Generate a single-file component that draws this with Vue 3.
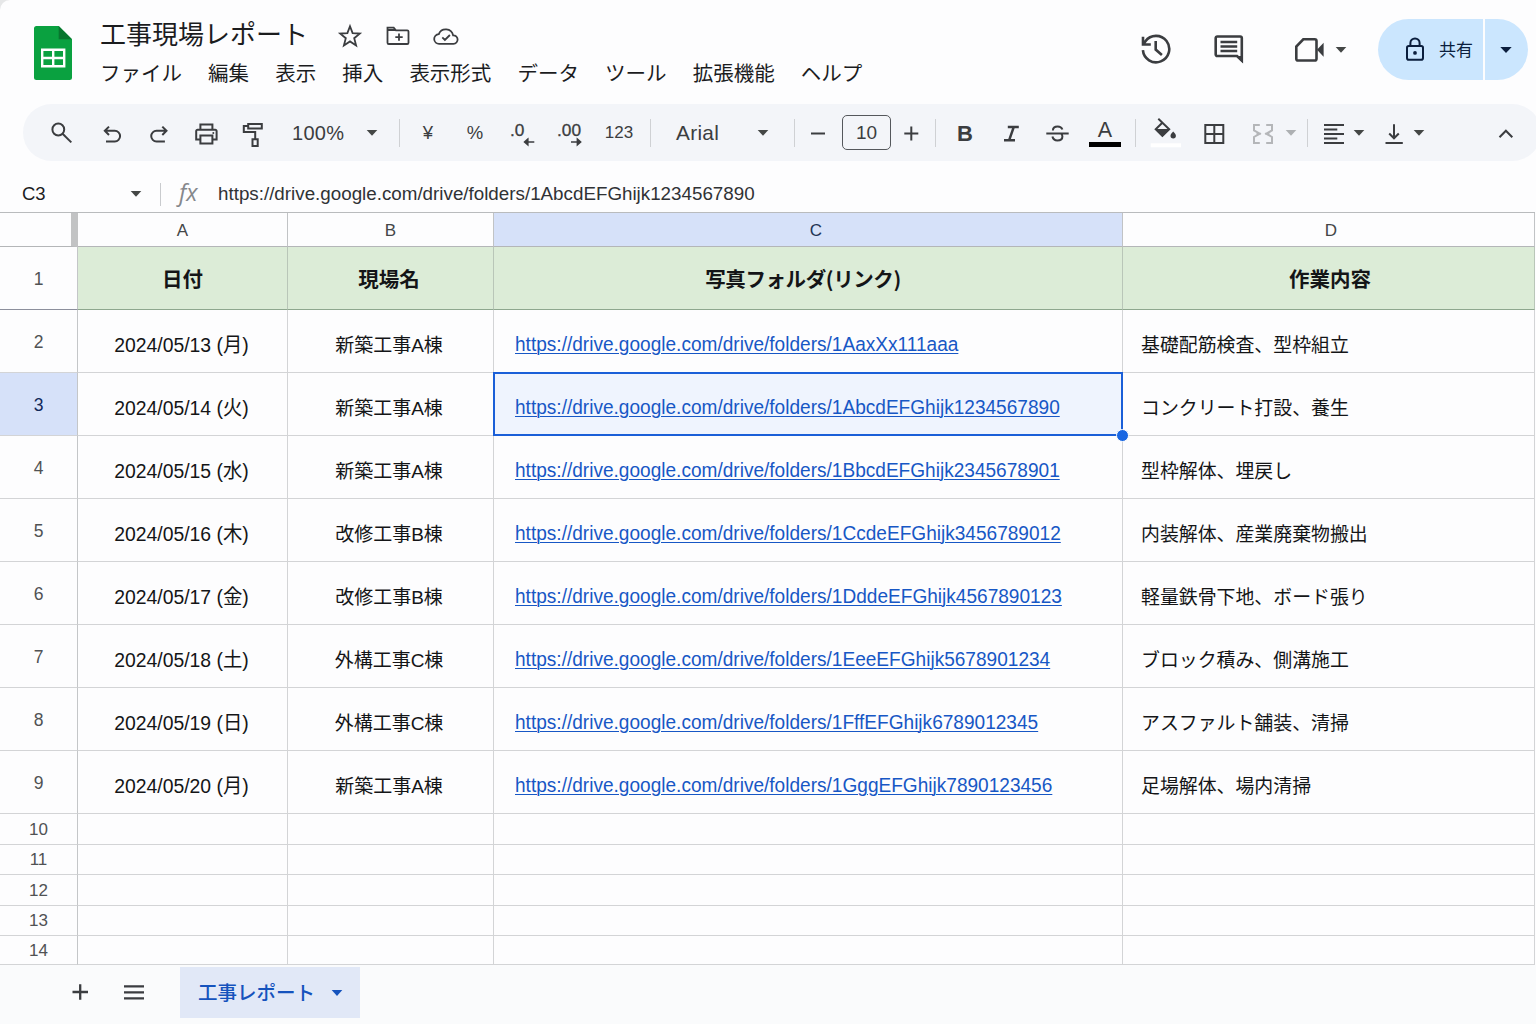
<template>
  <div class="app">
    <header class="header">
      <svg class="logo" viewBox="0 0 38 54">
        <path d="M2.5 0H24.7L38 13.3V51.5A2.5 2.5 0 0 1 35.5 54H2.5A2.5 2.5 0 0 1 0 51.5V2.5A2.5 2.5 0 0 1 2.5 0Z" fill="#0aa140" />
        <path d="M24.7 0 38 13.3H24.7Z" fill="#08762e" />
        <path d="M8.2 23.8h22v16.5h-22zM8.2 32h22M19.2 23.8v16.5" fill="none" stroke="#fff" stroke-width="2.4" />
      </svg>

      <div class="heading">
        <div class="title-row">
          <h1 class="title">工事現場レポート</h1>
          <svg class="icon title-icon" viewBox="0 0 28 28">
            <path d="m14 4.2 2.6 6.9 7.2.5-5.6 4.6 1.9 7.2-6.1-4-6.1 4 1.900-7.200-5.600-4.600 7.200-.5z" />
          </svg>
          <svg class="icon title-icon" viewBox="0 0 28 28">
            <path d="M3.500 5.700h6.200l2.200 2.600h11.300a1.300 1.300 0 0 1 1.300 1.300v11.100a1.300 1.300 0 0 1-1.300 1.300H4.800a1.300 1.300 0 0 1-1.300-1.300zM3.500 8h8M15 11.400v7.400M11.300 15.100h7.400" />
          </svg>
          <svg class="icon title-icon" viewBox="0 0 28 28">
            <path d="M7.400 21.900a4.900 4.900 0 0 1-.6-9.800 7.500 7.500 0 0 1 14.300 1.200 4.300 4.300 0 0 1 .4 8.600zM10.300 15.400l2.600 2.600 5-5" />
          </svg>
        </div>
        <nav class="menu">
          <span v-for="item in menus" :key="item">{{ item }}</span>
        </nav>
      </div>

      <div class="actions">
        <svg class="icon action action--history" viewBox="0 0 32 32">
          <path d="M2.900 17.200A13.200 13.200 0 1 0 5.400 8.300M3 3.800v7.700h7.800M3.300 11.200l3.400-4.400M15.700 8v8.600l6.200 5.400" />
        </svg>
        <svg class="icon action action--comment" viewBox="0 0 32 32">
          <path d="M28.800 27.500 24 23H4.300a1.600 1.600 0 0 1-1.600-1.600V5.100a1.600 1.600 0 0 1 1.600-1.600h22.900a1.600 1.600 0 0 1 1.600 1.600zM7.500 9h16.700M7.500 13.500h16.700M7.500 18h16.700" />
          <path d="m29.800 30-6.800-7h6.800z" class="solid" />
        </svg>
        <svg class="icon action action--meet" viewBox="0 0 32 32">
          <path d="M10.300 6.300h11.400a1.800 1.800 0 0 1 1.800 1.800v17.600a1.800 1.800 0 0 1-1.800 1.800H5.100a1.800 1.800 0 0 1-1.800-1.800V13.600z" />
          <path d="m24 16.800 6.600-7v14z" class="solid" />
        </svg>
        <svg class="caret" viewBox="0 0 12 6"><path d="M.7 0h10.6L6 5.7z" /></svg>
        <div class="share">
          <div class="share-main">
            <svg class="icon lock" viewBox="0 0 18 24">
              <rect x="1" y="9" width="16" height="13.7" rx="1.8" />
              <path d="M4.400 9V6a4.600 4.600 0 0 1 9.200 0v3" />
              <circle cx="9" cy="15.900" r="1.900" class="solid" />
            </svg>
            <span>共有</span>
          </div>
          <div class="share-more">
            <svg class="caret" viewBox="0 0 12 6"><path d="M.3 0h11.400L6 6z" /></svg>
          </div>
        </div>
      </div>
    </header>

    <div class="toolbar">
      <div class="group group--history">
        <svg class="icon tool" viewBox="0 0 28 29"><circle cx="10.3" cy="11.500" r="5.900" /><path d="m14.600 15.800 8.700 8.600" /></svg>
        <svg class="icon tool" viewBox="0 0 28 29"><path d="M11 8.600 6.800 12.800l4.200 4.200M6.800 12.800h10a5.200 5.200 0 0 1 0 10.600H8" /></svg>
        <svg class="icon tool" viewBox="0 0 28 29"><path d="m17.300 8.600 4.200 4.200-4.200 4.200M21.500 12.800h-10a5.200 5.200 0 0 0 0 10.600h8.400" /></svg>
        <svg class="icon tool" viewBox="0 0 28 29">
          <path d="M8.400 21.400H4.200v-8.300a1.300 1.300 0 0 1 1.300-1.300h17.800a1.300 1.300 0 0 1 1.300 1.300v8.300h-4.200M8.400 11.800V6.600h12v5.200M8.400 17.600h12v8h-12z" />
          <circle cx="21.300" cy="15" r="1" class="dot" />
        </svg>
        <svg class="icon tool" viewBox="0 0 28 29">
          <path d="M9.200 5.900h13.600v4.600H9.200zM9.200 8H4.800v5.900h11.400v7.400M13.500 21.300h5.200V28h-5.200z" />
        </svg>
      </div>

      <div class="select select--zoom">
        <span>100%</span>
        <svg class="caret" viewBox="0 0 12 6"><path d="M.7 0h10.600L6 5.700z" /></svg>
      </div>
      <i class="rule rule--zoom"></i>

      <div class="group group--format">
        <span class="tool glyph">¥</span>
        <span class="tool glyph">%</span>
        <svg class="tool decimal" viewBox="0 0 28 29">
          <text x="2" y="17.500">.0</text>
          <path d="M26.300 24H17M19.800 21.200 16.600 24l3.200 2.800z" />
        </svg>
        <svg class="tool decimal" viewBox="0 0 28 29">
          <text x="2" y="17.500">.00</text>
          <path d="M16 24h9M22.400 21.200l3.200 2.800-3.200 2.800z" />
        </svg>
        <span class="tool glyph glyph--number">123</span>
      </div>
      <i class="rule rule--format"></i>

      <div class="select select--font">
        <span>Arial</span>
        <svg class="caret" viewBox="0 0 12 6"><path d="M.7 0h10.600L6 5.700z" /></svg>
      </div>
      <i class="rule rule--font"></i>

      <div class="group group--size">
        <svg class="icon tool" viewBox="0 0 28 29"><path d="M7 15.500h14" /></svg>
        <span class="size">10</span>
        <svg class="icon tool" viewBox="0 0 28 29"><path d="M7.300 15.500h14M14.300 8.500v14" /></svg>
      </div>
      <i class="rule rule--size"></i>

      <div class="group group--style">
        <span class="tool bold">B</span>
        <svg class="icon tool italic" viewBox="0 0 28 29"><path d="M10.800 8.900h11M7 22.300h11M16.800 8.900l-4.700 13.400" /></svg>
        <svg class="icon tool" viewBox="0 0 28 29">
          <path d="M3.300 15.500h22.400M9.900 12.500c0-2.400 2-4 4.800-4 2.300 0 3.900 1 4.700 3M9.400 18.500c.6 2.500 2.500 3.900 5 3.900 2.900 0 5-1.600 5-4 0-1.200-.4-2.200-1.300-3" />
        </svg>
        <span class="color">A</span>
      </div>
      <i class="rule rule--style"></i>

      <div class="group group--cell">
        <svg class="icon tool fill" viewBox="0 0 32 30">
          <path d="m8.300.8 10.900 10.400-6.800 6.600-6.700-6.600 6.600-6.500" />
          <path d="M5 11h15l-7.600 7.800z" class="solid" />
          <path d="M23.200 13.600c1.700 1.900 2.700 3 2.700 4.100a2.700 2.700 0 0 1-5.400 0c0-1.100 1-2.200 2.700-4.100z" class="solid" />
          <path d="M.7 25.300h30.300v4H.7z" class="swatch" />
        </svg>
        <svg class="icon tool borders" viewBox="0 0 28 29"><path d="M5.300 7h18v18h-18zM14.300 7v18M5.300 16h18" /></svg>
        <svg class="icon tool merge" viewBox="0 0 28 29">
          <path d="M10.800 7H5v5.500l5.800 3.200L5 19v6h5.800M7.500 15.700H12M17.200 7H23v5.500l-5.800 3.200L23 19v6h-5.800M20.500 15.700H16" />
        </svg>
        <svg class="caret caret--muted" viewBox="0 0 12 6"><path d="M.7 0h10.600L6 5.700z" /></svg>
      </div>
      <i class="rule rule--cell"></i>

      <div class="group group--align">
        <svg class="icon tool" viewBox="0 0 28 29"><path d="M4 7h20M4 11.500h13.300M4 16h20M4 20.500h13.300M4 25h20" /></svg>
        <svg class="caret" viewBox="0 0 12 6"><path d="M.7 0h10.600L6 5.700z" /></svg>
        <svg class="icon tool valign" viewBox="0 0 28 29"><path d="M14 6.300v14M9.200 15.500 14 20.300l4.800-4.800M5.500 25h17.300" /></svg>
        <svg class="caret" viewBox="0 0 12 6"><path d="M.7 0h10.600L6 5.700z" /></svg>
      </div>

      <svg class="icon tool collapse" viewBox="0 0 28 29"><path d="m7.500 19.300 6.400-6.600 6.400 6.600" /></svg>
    </div>

    <div class="formula">
      <span class="cell-name">C3</span>
      <svg class="caret" viewBox="0 0 12 6"><path d="M.7 0h10.600L6 5.700z" /></svg>
      <i class="formula-rule"></i>
      <span class="fx">fx</span>
      <span class="formula-text">https://drive.google.com/drive/folders/1AbcdEFGhijk1234567890</span>
    </div>

    <main class="sheet">
      <div class="corner"></div>
      <div
        v-for="col in columns"
        :key="col"
        class="col-head"
        :class="[`col-head--${col.toLowerCase()}`, { 'col-head--active': col === 'C' }]"
      >
        {{ col }}
      </div>

      <div class="row-head row-head--frozen">1</div>
      <div
        v-for="(label, index) in labels"
        :key="label"
        class="cell cell--label"
        :class="`cell--label-${columns[index].toLowerCase()}`"
      >
        {{ label }}
      </div>

      <template v-for="(row, index) in rows" :key="row.date">
        <div class="row-head" :class="{ 'row-head--active': index === 1 }">{{ index + 2 }}</div>
        <div class="cell cell--center"><span class="date">{{ row.date }}</span></div>
        <div class="cell cell--center">{{ row.site }}</div>
        <div class="cell cell--link" :class="{ 'cell--selected': index === 1 }">
          <a>https://drive.google.com/drive/folders/{{ row.folder }}</a>
        </div>
        <div class="cell cell--work">{{ row.work }}</div>
      </template>

      <template v-for="n in 5" :key="n">
        <div class="row-head row-head--empty">{{ n + 9 }}</div>
        <div v-for="col in columns" :key="col" class="cell"></div>
      </template>
    </main>

    <footer class="tabs">
      <svg class="icon tabs-add" viewBox="0 0 28 28"><path d="M6.500 14h15.500M14.200 6.300v15.500" /></svg>
      <svg class="icon tabs-list" viewBox="0 0 28 28"><path d="M4 8.300h20M4 14.300h20M4 20.300h20" /></svg>
      <div class="tab">
        <span>工事レポート</span>
        <svg class="caret" viewBox="0 0 12 6"><path d="M.7 0h10.600L6 6z" /></svg>
      </div>
    </footer>
  </div>
</template>

<script setup>
const menus = ['ファイル', '編集', '表示', '挿入', '表示形式', 'データ', 'ツール', '拡張機能', 'ヘルプ']

const columns = ['A', 'B', 'C', 'D']

const labels = ['日付', '現場名', '写真フォルダ(リンク)', '作業内容']

const rows = [
  { date: '2024/05/13 (月)', site: '新築工事A棟', folder: '1AaxXx111aaa', work: '基礎配筋検査、型枠組立' },
  { date: '2024/05/14 (火)', site: '新築工事A棟', folder: '1AbcdEFGhijk1234567890', work: 'コンクリート打設、養生' },
  { date: '2024/05/15 (水)', site: '新築工事A棟', folder: '1BbcdEFGhijk2345678901', work: '型枠解体、埋戻し' },
  { date: '2024/05/16 (木)', site: '改修工事B棟', folder: '1CcdeEFGhijk3456789012', work: '内装解体、産業廃棄物搬出' },
  { date: '2024/05/17 (金)', site: '改修工事B棟', folder: '1DddeEFGhijk4567890123', work: '軽量鉄骨下地、ボード張り' },
  { date: '2024/05/18 (土)', site: '外構工事C棟', folder: '1EeeEFGhijk5678901234', work: 'ブロック積み、側溝施工' },
  { date: '2024/05/19 (日)', site: '外構工事C棟', folder: '1FffEFGhijk6789012345', work: 'アスファルト舗装、清掃' },
  { date: '2024/05/20 (月)', site: '新築工事A棟', folder: '1GggEFGhijk7890123456', work: '足場解体、場内清掃' },
]
</script>

<style>
body {
  background: #e6e7e8;
}
</style>

<style scoped>
.app {
  display: flex;
  flex-direction: column;
  width: 1536px;
  height: 1024px;
  overflow: hidden;
  border-top-left-radius: 10px;
  background: #fdfdfe;
  color: #1b1c1e;
  font-family: 'Liberation Sans', 'Noto Sans CJK JP', sans-serif;
}

.icon {
  flex: none;
  fill: none;
  stroke: #3b3d40;
  stroke-width: 2;
}

.icon .solid {
  fill: #3b3d40;
  stroke: none;
}

.caret {
  flex: none;
  width: 12px;
  height: 6px;
  fill: #444746;
}

/* header */
.header {
  display: flex;
  flex: none;
  height: 104px;
  box-sizing: border-box;
  padding-left: 34px;
}

.logo {
  width: 38px;
  height: 54px;
  margin-top: 26px;
}

.heading {
  margin: 14px 0 0 28px;
  font-family: 'Noto Sans CJK JP', sans-serif;
}

.title-row {
  display: flex;
  align-items: center;
  height: 38px;
}

.title {
  width: 236px;
  margin: 0;
  font-size: 26px;
  font-weight: 400;
  line-height: 38px;
  white-space: nowrap;
}

.title-icon {
  width: 28px;
  height: 28px;
  margin: 5px 20px 0 0;
  stroke-width: 1.8;
}

.menu {
  display: flex;
  gap: 26.1px;
  margin-top: 4px;
  font-size: 20.5px;
  line-height: 32px;
  white-space: nowrap;
}

.actions {
  display: flex;
  align-items: center;
  height: 61px;
  margin: 19px 8px 0 auto;
}

.action {
  width: 32px;
  height: 32px;
  margin-top: -1px;
  stroke-width: 2.6;
}

.action--history {
  margin-right: 41px;
}

.action--comment {
  margin-right: 48px;
}

.action--meet {
  margin-right: 10px;
}

.share {
  display: flex;
  height: 61px;
  margin-left: 31px;
  color: #0b1e3d;
}

.share-main,
.share-more {
  display: flex;
  align-items: center;
  background: #cbe6fe;
}

.share-main {
  width: 105px;
  box-sizing: border-box;
  padding-left: 28px;
  border-radius: 31px 0 0 31px;
  font-family: 'Noto Sans CJK JP', sans-serif;
  font-size: 17px;
}

.share-main span {
  padding-bottom: 3px;
}

.share-more {
  justify-content: center;
  width: 43px;
  margin-left: 2px;
  box-sizing: border-box;
  padding-right: 2px;
  border-radius: 0 31px 31px 0;
}

.share .caret {
  fill: #0b1e3d;
}

.lock {
  width: 18px;
  height: 24px;
  margin: 0 15px 2px 0;
  stroke: #0b1e3d;
}

.lock .solid {
  fill: #0b1e3d;
}

/* toolbar */
.toolbar {
  display: flex;
  flex: none;
  align-items: center;
  width: 1518px;
  height: 57px;
  box-sizing: border-box;
  margin-left: 23px;
  padding-left: 25px;
  border-radius: 29px;
  background: #f3f5f9;
  color: #3b3d40;
}

.group {
  display: flex;
  align-items: center;
}

.tool {
  flex: none;
  width: 28px;
  height: 29px;
}

.group--history {
  gap: 19px;
}

.group--history .tool:first-child {
  margin-right: 3px;
}

.select {
  display: flex;
  align-items: center;
  justify-content: space-between;
  padding-top: 1px;
  font-size: 20px;
  line-height: 24px;
}

.select--zoom {
  width: 86px;
  margin-left: 25px;
  letter-spacing: 0.3px;
}

.select--font {
  width: 93px;
  margin-left: 25px;
  font-size: 20.8px;
  letter-spacing: 0.3px;
}

.rule {
  flex: none;
  width: 1px;
  height: 28px;
  background: #cfd1d4;
}

.rule--zoom {
  margin: 0 14px 0 21px;
}

.rule--format {
  margin-left: 17px;
}

.rule--font {
  margin: 0 9px 0 25px;
}

.rule--size {
  margin: 0 15px 0 10px;
}

.rule--style {
  margin: 0 14px;
}

.rule--cell {
  margin: 0 12px 0 10px;
}

.group--format {
  gap: 19px;
}

.glyph {
  font-size: 18.5px;
  line-height: 30px;
  text-align: center;
}

.glyph--number {
  display: flex;
  justify-content: center;
  margin-left: 3px;
  font-size: 17px;
}

.decimal {
  fill: #3b3d40;
  stroke: #3b3d40;
  stroke-width: 1.6;
}

.decimal text {
  font-size: 17.3px;
  stroke-width: 0.3;
}

.size {
  width: 49px;
  height: 35px;
  box-sizing: border-box;
  margin: 0 6px 0 10px;
  border: 1.5px solid #55585c;
  border-radius: 5px;
  font-size: 19px;
  line-height: 34px;
  text-align: center;
}

.group--style {
  gap: 18px;
}

.bold {
  font-size: 22px;
  font-weight: 700;
  line-height: 31px;
  text-align: center;
}

.italic {
  stroke-width: 2.5;
}

.color {
  width: 32px;
  height: 24px;
  border-bottom: 5px solid #000;
  font-size: 21.5px;
  line-height: 25px;
  text-align: center;
}

.fill {
  width: 32px;
  height: 30px;
  margin: 1px 18px 0 0;
}

.fill .swatch {
  fill: #fff;
  stroke: none;
}

.borders {
  margin-right: 21px;
}

.merge {
  margin-right: 8px;
  stroke: #b4b6b9;
}

.dot {
  fill: #3b3d40;
  stroke: none;
}

.caret--muted {
  fill: #adb0b3;
}

.group--align .tool {
  margin-right: 5px;
}

.group--align .valign {
  margin-left: 15px;
}

.collapse {
  margin-left: 67px;
}

/* formula bar */
.formula {
  display: flex;
  flex: none;
  align-items: center;
  height: 51px;
  box-sizing: border-box;
  padding: 15px 0 0 22px;
  font-size: 18.8px;
}

.cell-name {
  width: 108px;
  font-size: 18.5px;
}

.formula-rule {
  width: 1px;
  height: 23px;
  margin: 0 18px;
  background: #c9cbce;
}

.fx {
  width: 39px;
  padding-bottom: 4px;
  color: #85888c;
  font-family: 'Open Sans', sans-serif;
  font-size: 23.5px;
  font-style: italic;
  line-height: 24px;
}

.formula-text {
  color: #303235;
}

/* grid */
.sheet {
  display: grid;
  flex: none;
  grid-template-columns: 78px 210px 206px 629px 412px;
  grid-template-rows: 34px repeat(9, 63px) 31px 30px 31px 30px 29px;
  width: 1535px;
  border-top: 1px solid #b9bbbd;
}

.corner,
.col-head,
.row-head,
.cell {
  box-sizing: border-box;
  border-right: 1px solid #d3d4d6;
  border-bottom: 1px solid #d3d4d6;
}

.corner {
  border-right: 7px solid #c2c3c4;
  border-bottom-color: #b4b6b8;
}

.col-head {
  border-right-color: #c1c3c5;
  border-bottom-color: #b4b6b8;
  color: #444648;
  font-size: 17px;
  line-height: 35px;
  text-align: center;
}

.col-head--active {
  padding-left: 16px;
  background: #d6e1f9;
  color: #223355;
}

.col-head--d {
  padding-left: 5px;
}

.row-head {
  display: flex;
  align-items: center;
  justify-content: center;
  padding-top: 3px;
  border-right-color: #c4c6c8;
  color: #505254;
  font-size: 17.5px;
}

.row-head--frozen {
  border-bottom-color: #8c8f9c;
}

.row-head--empty {
  padding-top: 1px;
  font-size: 17px;
}

.row-head--active {
  background: #d6e1f9;
  color: #12285a;
}

.cell {
  display: flex;
  align-items: center;
  color: #141517;
  font-size: 19px;
  white-space: nowrap;
}

.cell--label {
  justify-content: center;
  border-right-color: #b9c6b8;
  border-bottom-color: #8ea78e;
  background: #dcecd7;
  font-family: 'Noto Sans CJK JP', sans-serif;
  font-size: 20.5px;
  font-weight: 700;
}

.cell--label-b {
  padding-right: 3px;
}

.cell--label-c {
  padding-right: 10px;
  letter-spacing: -0.4px;
}

.cell--label-d {
  padding-left: 3px;
}

.cell--center {
  justify-content: center;
  padding: 4px 3px 0 0;
}

/* dates and links are set in slightly condensed figures */
.date {
  font-size: 20.3px;
  transform: scaleX(0.955);
}

.cell--link {
  padding: 5px 0 0 21px;
}

.cell--link a {
  color: #1757c5;
  font-size: 20.5px;
  text-decoration: underline;
  text-decoration-thickness: 1px;
  text-underline-offset: 2px;
  transform: scaleX(0.93);
  transform-origin: left;
}

.cell--work {
  padding: 4px 0 0 18px;
  font-size: 18.9px;
}

.cell--selected {
  position: relative;
  background: #eff4fe;
}

.cell--selected::before {
  content: '';
  position: absolute;
  inset: -1px -1px -1px -1px;
  border: 2px solid #1a5fd8;
}

.cell--selected::after {
  content: '';
  position: absolute;
  right: -7px;
  bottom: -7px;
  width: 11px;
  height: 11px;
  border: 1px solid #fff;
  border-radius: 50%;
  background: #1967e2;
}

/* sheet tabs */
.tabs {
  display: flex;
  flex: 1;
  align-items: flex-start;
  background: #fafbfc;
}

.tabs .icon {
  width: 28px;
  height: 28px;
  margin-top: 13px;
  stroke-width: 2.3;
}

.tabs-add {
  margin-left: 66px;
}

.tabs-list {
  margin-left: 26px;
}

.tab {
  display: flex;
  align-items: center;
  width: 180px;
  height: 51px;
  box-sizing: border-box;
  margin: 2px 0 0 32px;
  padding-left: 18px;
  background: #e1e8f7;
  color: #1553bd;
  font-family: 'Noto Sans CJK JP', sans-serif;
  font-size: 19.5px;
  font-weight: 500;
}

.tab span {
  padding-bottom: 2px;
}

.tab .caret {
  margin-left: 16px;
  fill: #1553bd;
}
</style>
